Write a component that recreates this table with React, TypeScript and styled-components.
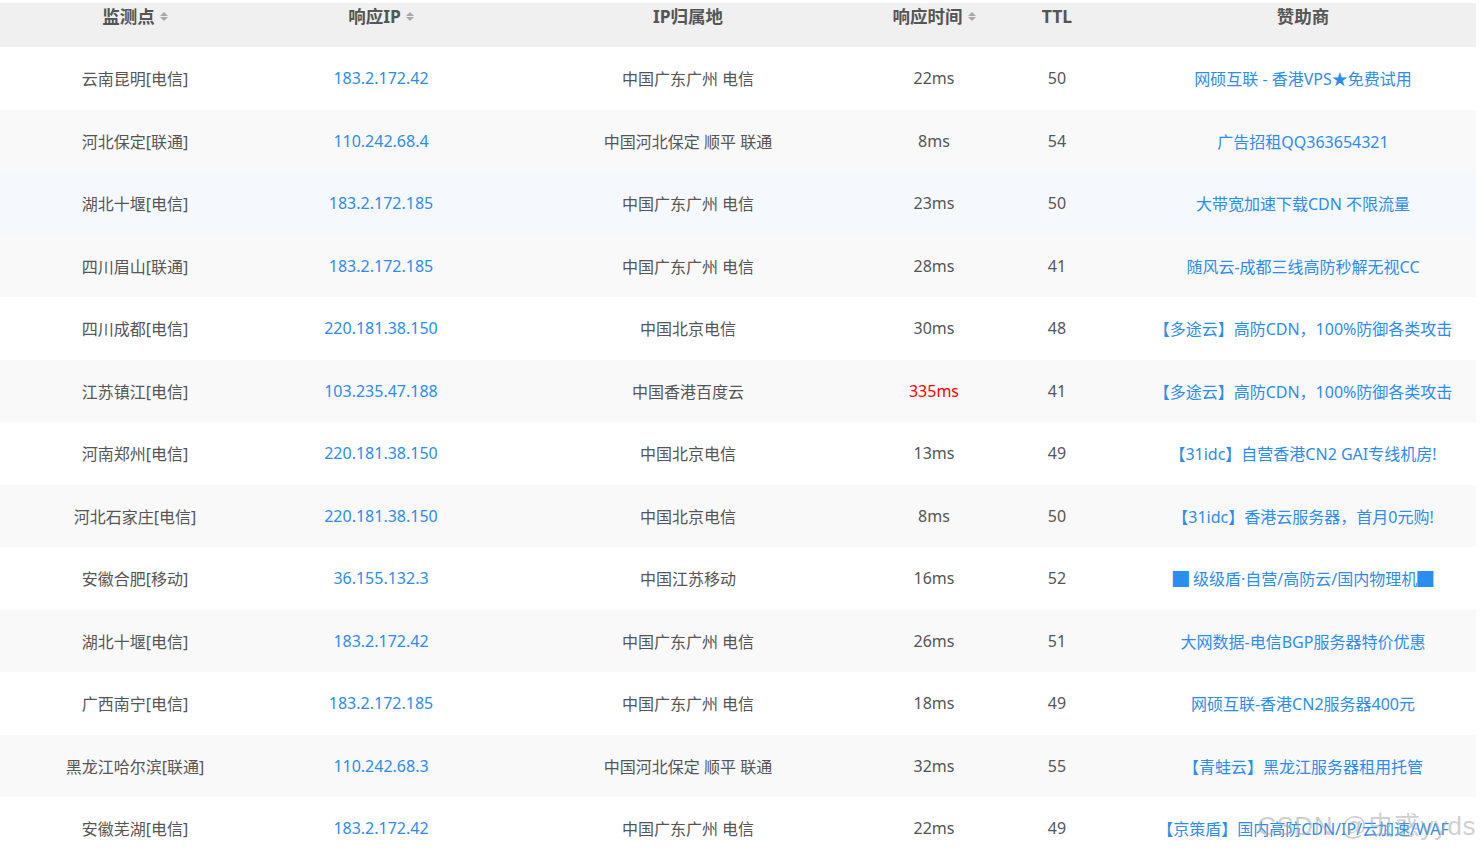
import React from "react";
import styled, { createGlobalStyle } from "styled-components";

const Global = createGlobalStyle`
  html, body { margin: 0; padding: 0; background: #fff; }
  body { font-family: "Noto Sans", "Noto Sans CJK SC", sans-serif; }
`;

const Page = styled.div`
  position: relative;
  width: 1480px;
  height: 852px;
  overflow: hidden;
  padding-top: 3px;
  box-sizing: border-box;
`;

const Table = styled.table`
  width: 1476px;
  border-collapse: collapse;
  table-layout: fixed;
`;

const Head = styled.th`
  height: 44px;
  padding: 0;
  padding-bottom: 18px;
  box-sizing: border-box;
  background: #f0f0f0;
  color: #555;
  font-size: 17.5px;
  font-weight: 700;
  text-align: center;
  vertical-align: middle;
  line-height: 26px;
`;

const HeadInner = styled.span`
  display: inline-flex;
  align-items: center;
  gap: 5px;
`;

const Sort = styled.span`
  display: inline-flex;
  flex-direction: column;
  gap: 1px;
  margin-top: 1px;
  &::before, &::after {
    content: "";
    width: 0;
    height: 0;
    border-left: 4px solid transparent;
    border-right: 4px solid transparent;
  }
  &::before { border-bottom: 4.5px solid #a8a8a8; }
  &::after { border-top: 4.5px solid #a8a8a8; }
`;

const Row = styled.tr<{ $bg: string }>`
  background: ${(p) => p.$bg};
`;

const Cell = styled.td<{ $tone?: "link" | "red" | "text" }>`
  height: 62.5px;
  padding: 0;
  text-align: center;
  vertical-align: middle;
  font-size: 16px;
  white-space: nowrap;
  color: ${(p) => (p.$tone === "link" ? "#2d8cf0" : p.$tone === "red" ? "#ff0000" : "#555")};
`;

const Watermark = styled.div`
  position: absolute;
  right: 4px;
  bottom: 10px;
  font-family: "Liberation Sans", "Noto Sans CJK SC", sans-serif;
  font-size: 26px;
  color: rgba(160, 160, 160, 0.5);
  letter-spacing: 0.5px;
  pointer-events: none;
`;

type R = [string, string, string, string, string, string];

const rows: R[] = [
  ["云南昆明[电信]", "183.2.172.42", "中国广东广州 电信", "22ms", "50", "网硕互联 - 香港VPS★免费试用"],
  ["河北保定[联通]", "110.242.68.4", "中国河北保定 顺平 联通", "8ms", "54", "广告招租QQ363654321"],
  ["湖北十堰[电信]", "183.2.172.185", "中国广东广州 电信", "23ms", "50", "大带宽加速下载CDN 不限流量"],
  ["四川眉山[联通]", "183.2.172.185", "中国广东广州 电信", "28ms", "41", "随风云-成都三线高防秒解无视CC"],
  ["四川成都[电信]", "220.181.38.150", "中国北京电信", "30ms", "48", "【多途云】高防CDN，100%防御各类攻击"],
  ["江苏镇江[电信]", "103.235.47.188", "中国香港百度云", "335ms", "41", "【多途云】高防CDN，100%防御各类攻击"],
  ["河南郑州[电信]", "220.181.38.150", "中国北京电信", "13ms", "49", "【31idc】自营香港CN2 GAI专线机房!"],
  ["河北石家庄[电信]", "220.181.38.150", "中国北京电信", "8ms", "50", "【31idc】香港云服务器，首月0元购!"],
  ["安徽合肥[移动]", "36.155.132.3", "中国江苏移动", "16ms", "52", "█ 级级盾·自营/高防云/国内物理机█"],
  ["湖北十堰[电信]", "183.2.172.42", "中国广东广州 电信", "26ms", "51", "大网数据-电信BGP服务器特价优惠"],
  ["广西南宁[电信]", "183.2.172.185", "中国广东广州 电信", "18ms", "49", "网硕互联-香港CN2服务器400元"],
  ["黑龙江哈尔滨[联通]", "110.242.68.3", "中国河北保定 顺平 联通", "32ms", "55", "【青蛙云】黑龙江服务器租用托管"],
  ["安徽芜湖[电信]", "183.2.172.42", "中国广东广州 电信", "22ms", "49", "【京策盾】国内高防CDN/IP/云加速/WAF"],
];

const cols: { label: string; width: number; sort: boolean }[] = [
  { label: "监测点", width: 270, sort: true },
  { label: "响应IP", width: 222, sort: true },
  { label: "IP归属地", width: 392, sort: false },
  { label: "响应时间", width: 100, sort: true },
  { label: "TTL", width: 146, sort: false },
  { label: "赞助商", width: 346, sort: false },
];

const rowBg = (i: number) => (i === 2 ? "#f5f9fd" : i % 2 === 1 ? "#f9f9f9" : "#ffffff");

export default function App() {
  return (
    <>
      <Global />
      <Page>
        <Table>
          <colgroup>
            {cols.map((c) => (
              <col key={c.label} style={{ width: c.width }} />
            ))}
          </colgroup>
          <thead>
            <tr>
              {cols.map((c) => (
                <Head key={c.label}>
                  <HeadInner>
                    {c.label}
                    {c.sort && <Sort />}
                  </HeadInner>
                </Head>
              ))}
            </tr>
          </thead>
          <tbody>
            {rows.map((r, i) => (
              <Row key={i} $bg={rowBg(i)}>
                <Cell>{r[0]}</Cell>
                <Cell $tone="link">{r[1]}</Cell>
                <Cell>{r[2]}</Cell>
                <Cell $tone={parseInt(r[3]) > 200 ? "red" : "text"}>{r[3]}</Cell>
                <Cell>{r[4]}</Cell>
                <Cell $tone="link">{r[5]}</Cell>
              </Row>
            ))}
          </tbody>
        </Table>
        <Watermark>CSDN @虫惑yyds</Watermark>
      </Page>
    </>
  );
}
